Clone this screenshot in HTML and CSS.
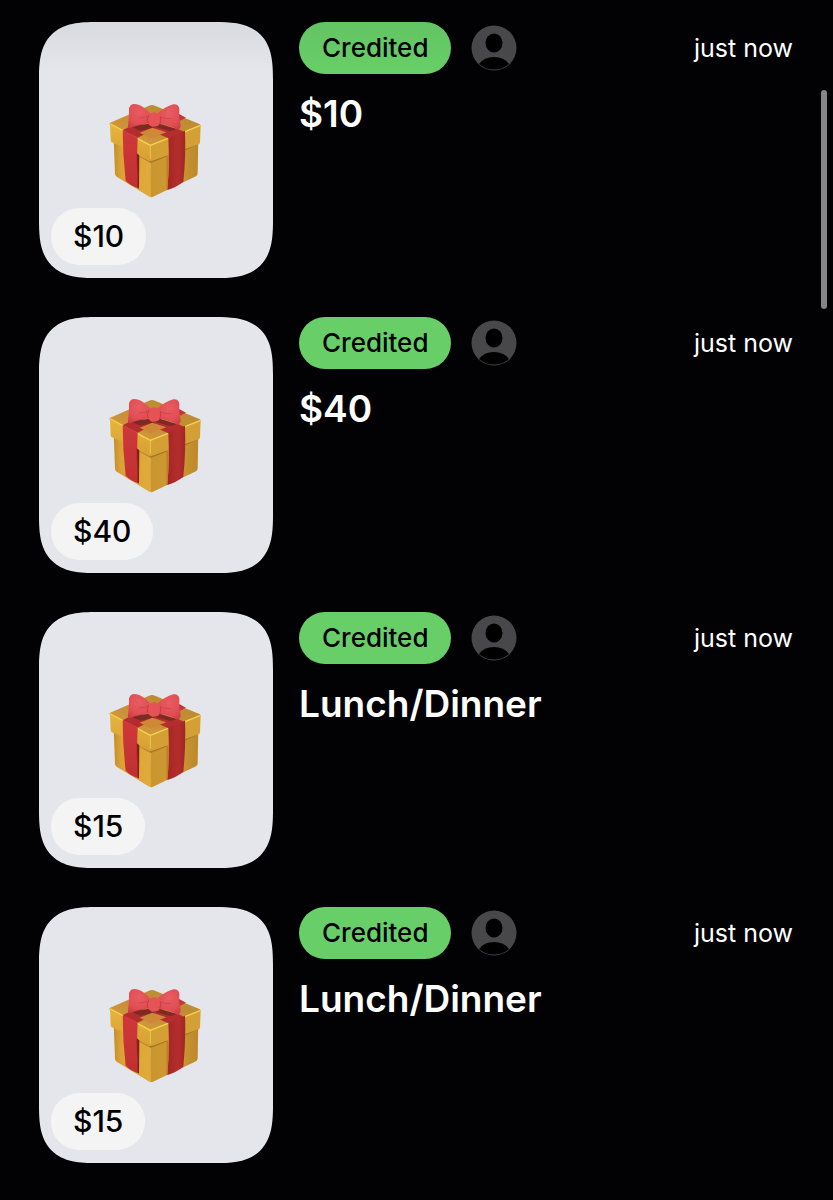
FILE: index.html
```html
<!DOCTYPE html>
<html lang="en">
<head>
    <meta charset="UTF-8">
    <meta name="viewport" content="width=device-width, initial-scale=1">
    <title>Gifts</title>
    <link rel="stylesheet" href="styles.css">
</head>
<body>
<!-- shared icons -->
<svg class="sprite" aria-hidden="true">
    <defs>
        <linearGradient id="gold-left" x1="0" y1="0" x2="1" y2="0">
            <stop offset="0" stop-color="#c48d2c"/>
            <stop offset=".2" stop-color="#dba335"/>
            <stop offset="1" stop-color="#dfab3b"/>
        </linearGradient>
        <linearGradient id="gold-right" x1="0" y1="0" x2="1" y2="0">
            <stop offset="0" stop-color="#c9952f"/>
            <stop offset=".5" stop-color="#cf9a33"/>
            <stop offset="1" stop-color="#bd882b"/>
        </linearGradient>
        <linearGradient id="lid-left" x1="0" y1="0" x2="0" y2="1">
            <stop offset="0" stop-color="#e6b53c"/>
            <stop offset="1" stop-color="#d79f34"/>
        </linearGradient>
        <linearGradient id="lid-top" x1="0" y1="1" x2="1" y2="0">
            <stop offset="0" stop-color="#d6a33c"/>
            <stop offset=".45" stop-color="#c98d38"/>
            <stop offset="1" stop-color="#b38b2f"/>
        </linearGradient>
        <linearGradient id="ribbon" x1="0" y1="0" x2="0" y2="1">
            <stop offset="0" stop-color="#d0383c"/>
            <stop offset="1" stop-color="#c03030"/>
        </linearGradient>
        <linearGradient id="ribbon-dark" x1="0" y1="0" x2="1" y2="0">
            <stop offset="0" stop-color="#a32725"/>
            <stop offset=".6" stop-color="#b52d2d"/>
            <stop offset="1" stop-color="#9f2724"/>
        </linearGradient>
        <radialGradient id="bow" cx=".5" cy=".35" r=".8">
            <stop offset="0" stop-color="#e85c60"/>
            <stop offset=".6" stop-color="#e04e54"/>
            <stop offset="1" stop-color="#c8383f"/>
        </radialGradient>
    </defs>
    <symbol id="gift" viewBox="2 0 330 330">
        <!-- box -->
        <path fill="url(#gold-left)" d="M40 130L150 182L154 307Q151 307 147 305L49 245Q44 241 44 236Z"/>
        <path fill="url(#gold-right)" d="M150 182L294 130L292 235Q292 241 287 244L158 305Q155 307 152 306Z"/>
        <path fill="#8f611d" opacity=".6" d="M42 139L66 151V157L42 145ZM112 173L150 194L202 177V184L151 204L112 182ZM252 160L294 143V148L252 167Z"/>
        <!-- lid -->
        <path fill="url(#lid-top)" d="M28 84L146 32Q155 28 164 32L299 88Q302 91 298 95L154 152Q150 154 146 152L31 92Q26 88 28 84Z"/>
        <path fill="url(#lid-left)" d="M29 86L150 151L151 198Q150 200 146 198L35 142Q31 140 31 135Z"/>
        <path fill="#d49f34" d="M150 151L301 90L299 142Q299 146 295 148L154 198Q151 199 150 197Z"/>
        <path fill="none" stroke="#f3d44f" stroke-width="4" stroke-linecap="round" stroke-linejoin="round" d="M31 87L150 151L299 92"/>
        <path fill="none" stroke="#e8c24a" stroke-width="3" d="M150 153V192"/>
        <!-- ribbons -->
        <path fill="#b52c2e" d="M67 106L109 84L173 98L112 128Z"/>
        <path fill="#b52d30" d="M153 91L232 101L252 111L204 130L141 102Z"/>
        <path fill="#c5363a" d="M220 48L257 68L238 78L214 66Z"/>
        <path fill="#7e2924" d="M94 96L145 86L180 87L231 103L210 108L166 96L120 107Z"/>
        <path fill="#cf8836" d="M118 113L156 98L198 112L151 130Z"/>
        <path fill="url(#ribbon)" d="M67 106Q90 114 112 128Q108 210 115 280Q91 273 76 257Q67 180 67 106Z"/>
        <path fill="#851f1c" d="M109 175L117 181L116 281L112 278Z"/>
        <path fill="url(#ribbon-dark)" d="M204 128Q230 116 254 107Q257 180 249 260Q228 277 201 285Q208 210 204 128Z"/>
        <path fill="#bf8228" d="M198 184L203 183Q207 235 201 285L198 285Z"/>
        <!-- bow -->
        <path fill="url(#bow)" d="M86 40Q91 24 108 28Q126 31 146 51Q151 56 150 72Q148 83 139 86Q116 87 91 99Q82 100 83 91Q87 65 86 40Z"/>
        <path fill="url(#bow)" d="M173 54Q193 36 219 28Q236 27 237 43Q234 67 241 89Q241 103 230 104Q207 90 180 87Q170 78 173 54Z"/>
        <path fill="none" stroke="#c63f46" stroke-width="2" stroke-linecap="round" d="M116 69Q133 69 145 63M177 65Q193 72 212 71"/>
        <path fill="#e65356" d="M145 61Q151 52 162 52Q175 54 180 64Q183 78 176 91Q169 96 155 95Q144 91 142 82Q141 69 145 61Z"/>
        <path fill="none" stroke="#bf3037" stroke-width="2" d="M145 61Q139 72 143 85M180 64Q183 78 176 91"/>
    </symbol>
    <symbol id="person" viewBox="0 0 46 46">
        <circle cx="23" cy="23" r="22.5" fill="#48484a"/>
        <ellipse cx="23" cy="18" rx="8.5" ry="9.5" fill="#000"/>
        <path fill="#000" d="M8 39Q13 32 23 32T38 39Q32 44.500 23 44.500T8 39Z"/>
    </symbol>
</svg>

<main class="feed">
    <ul class="gift-list">
        <li class="gift">
            <div class="thumb thumb-first">
                <svg class="gift-icon" role="img" aria-label="Gift"><use href="#gift"/></svg>
                <span class="amount">$10</span>
            </div>
            <div class="info">
                <div class="meta">
                    <span class="status status-first">Credited</span>
                    <svg class="avatar" role="img" aria-label="Sender"><use href="#person"/></svg>
                    <time class="when">just now</time>
                </div>
                <h2 class="title">$10</h2>
            </div>
        </li>
        <li class="gift">
            <div class="thumb">
                <svg class="gift-icon" role="img" aria-label="Gift"><use href="#gift"/></svg>
                <span class="amount">$40</span>
            </div>
            <div class="info">
                <div class="meta">
                    <span class="status">Credited</span>
                    <svg class="avatar" role="img" aria-label="Sender"><use href="#person"/></svg>
                    <time class="when">just now</time>
                </div>
                <h2 class="title">$40</h2>
            </div>
        </li>
        <li class="gift">
            <div class="thumb">
                <svg class="gift-icon" role="img" aria-label="Gift"><use href="#gift"/></svg>
                <span class="amount">$15</span>
            </div>
            <div class="info">
                <div class="meta">
                    <span class="status">Credited</span>
                    <svg class="avatar" role="img" aria-label="Sender"><use href="#person"/></svg>
                    <time class="when">just now</time>
                </div>
                <h2 class="title">Lunch/Dinner</h2>
            </div>
        </li>
        <li class="gift">
            <div class="thumb">
                <svg class="gift-icon" role="img" aria-label="Gift"><use href="#gift"/></svg>
                <span class="amount">$15</span>
            </div>
            <div class="info">
                <div class="meta">
                    <span class="status">Credited</span>
                    <svg class="avatar" role="img" aria-label="Sender"><use href="#person"/></svg>
                    <time class="when">just now</time>
                </div>
                <h2 class="title">Lunch/Dinner</h2>
            </div>
        </li>
    </ul>
</main>
<div class="scroll-thumb"></div>
</body>
</html>
```
FILE: styles.css
```css
* {
    box-sizing: border-box;
    margin: 0;
    padding: 0;
}

body {
    background: #020103;
    color: #fff;
    font-family: Inter, "Liberation Sans", sans-serif;
}

.sprite {
    position: absolute;
    width: 0;
    height: 0;
}

.feed {
    padding: 22px 40px 36px 39px;
}

.gift-list {
    display: flex;
    flex-direction: column;
    gap: 39px;
    list-style: none;
}

.gift {
    display: flex;
    gap: 26px;
}

.thumb {
    position: relative;
    display: flex;
    flex: none;
    align-items: center;
    justify-content: center;
    width: 234px;
    height: 256px;
    border-radius: 46px;
    background: #e5e6eb;
}

.thumb-first {
    background: linear-gradient(#d9dadf, #e5e6eb 50px);
}

/* smoother corners where the browser has them */
@supports (corner-shape: superellipse(1.5)) {
    .thumb {
        border-radius: 58px;
        corner-shape: superellipse(1.5);
    }
}

.gift-icon {
    width: 110px;
    height: 110px;
}

.amount {
    position: absolute;
    left: 12px;
    bottom: 13px;
    padding: 0 22px;
    border-radius: 28px;
    background: #f4f4f5;
    color: #000;
    font-size: 30px;
    font-weight: 500;
    line-height: 57px;
}

.info {
    flex: 1;
    min-width: 0;
}

.meta {
    display: flex;
    align-items: center;
    gap: 20px;
}

.status {
    padding: 0 23px;
    border-radius: 26px;
    background: #68cf68;
    color: #000;
    font-size: 26px;
    font-weight: 500;
    line-height: 52px;
}

.status-first {
    background: linear-gradient(#62c462, #68cf68);
}

.avatar {
    width: 46px;
    height: 46px;
}

.when {
    margin-left: auto;
    font-size: 25px;
    line-height: 52px;
}

.title {
    margin-top: 16px;
    font-size: 37px;
    font-weight: 600;
    line-height: 48px;
}

/* scroll position mark */
.scroll-thumb {
    position: fixed;
    top: 90px;
    right: 6px;
    width: 6px;
    height: 219px;
    border-radius: 3px;
    background: #848486;
}
```
